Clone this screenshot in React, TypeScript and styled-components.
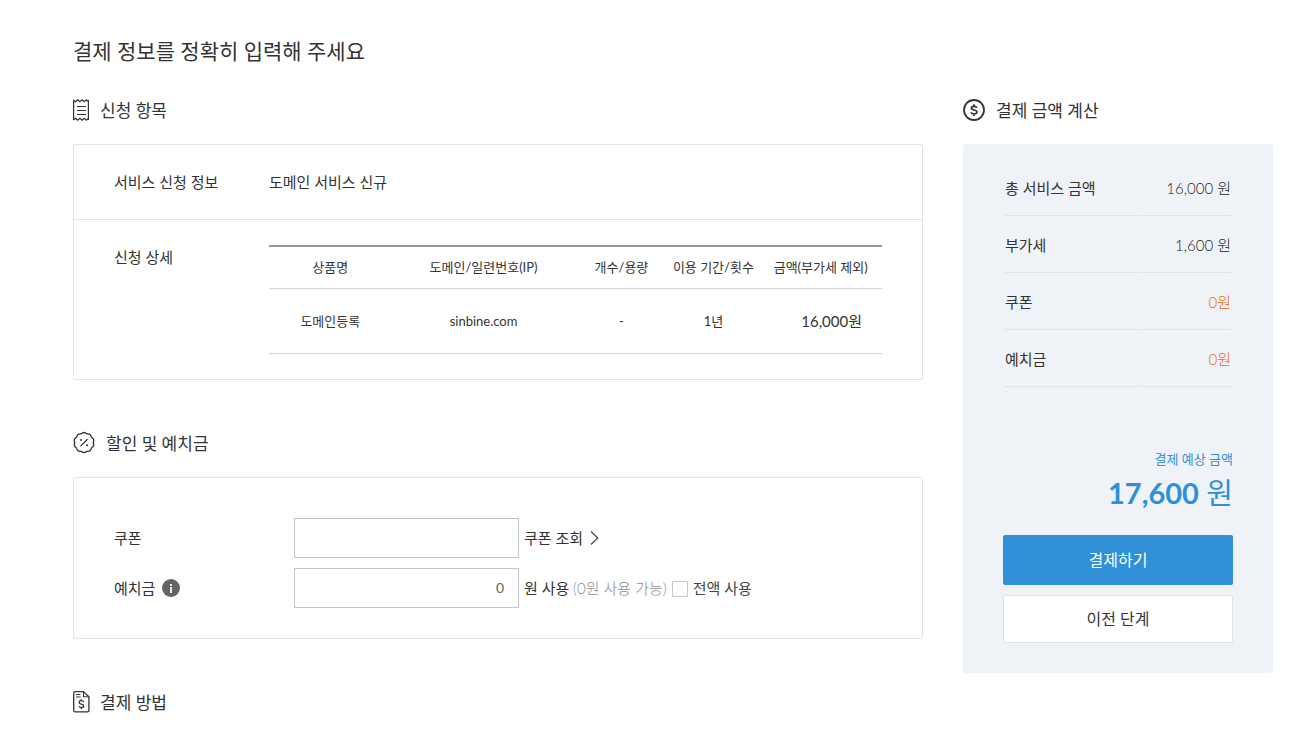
import React from 'react';
import styled, { createGlobalStyle } from 'styled-components';

const GlobalStyle = createGlobalStyle`
  *, *::before, *::after { box-sizing: border-box; }
  body {
    margin: 0;
    background: #fff;
    color: #333;
    font-family: Lato, 'Noto Sans CJK KR', sans-serif;
    font-size: 15px;
    line-height: 24px;
  }
  button, input { font: inherit; color: inherit; }
`;

const Page = styled.main`
  padding: 35px 34px 0 73px;
`;

const Title = styled.h1`
  margin: 0 0 31px;
  font-size: 21px;
  font-weight: 400;
  line-height: 32px;
`;

const Columns = styled.div`
  display: grid;
  grid-template-columns: minmax(0, 1fr) 310px;
  gap: 40px;
  align-items: start;
`;

const SectionHead = styled.h2<{ $gap: number }>`
  display: flex;
  align-items: flex-start;
  gap: ${(p) => p.$gap}px;
  margin: 0 0 20px;
  font-size: 17px;
  font-weight: 400;
  line-height: 26px;

  svg { flex: none; }
`;

const Panel = styled.div`
  margin-bottom: 51px;
  border: 1px solid #e4e4e4;
  border-radius: 2px;
`;

const InfoRow = styled.div`
  display: grid;
  grid-template-columns: 155px minmax(0, 1fr);
  padding: 25px 40px;

  & + & { border-top: 1px solid #e4e4e4; }
`;

const ItemTable = styled.table`
  width: 100%;
  table-layout: fixed;
  border-collapse: collapse;
  border-top: 2px solid #969696;
  font-size: 13px;
  text-align: center;
`;

const ItemHead = styled.th<{ $width: string }>`
  width: ${(p) => p.$width};
  height: 42px;
  padding: 0;
  border-bottom: 1px solid #d5d5d5;
  font-weight: 400;
  white-space: nowrap;
`;

const ItemCell = styled.td`
  height: 65px;
  padding: 0;
  border-bottom: 1px solid #d5d5d5;
`;

const PriceCell = styled(ItemCell)`
  padding-right: 20px;
  font-size: 15px;
  text-align: right;
`;

const Form = styled.form`
  display: grid;
  gap: 10px;
  padding: 40px 40px 30px;
`;

const FormRow = styled.div`
  display: grid;
  grid-template-columns: 180px minmax(0, 1fr);
  align-items: center;
`;

const FieldName = styled.div`
  display: flex;
  align-items: center;
  gap: 7px;
`;

const Controls = styled.div`
  display: flex;
  align-items: center;
  gap: 5px;
`;

const TextBox = styled.input`
  width: 225px;
  height: 40px;
  padding: 0 14px;
  border: 1px solid #c4c4c4;
  border-radius: 0;
  background: #fff;
  color: #666;
  font-size: 14px;
  text-align: right;
`;

const InfoButton = styled.button`
  display: flex;
  padding: 0;
  border: 0;
  background: none;
  cursor: pointer;
`;

const LookupLink = styled.a`
  display: flex;
  align-items: center;
  gap: 7px;
  color: #333;
  text-decoration: none;
`;

const Available = styled.span`
  color: #8c8c8c;
  font-weight: 300;
`;

const UseAll = styled.label`
  display: flex;
  align-items: center;
  gap: 5px;
  color: #444;
`;

const CheckBox = styled.input`
  appearance: none;
  width: 16px;
  height: 16px;
  margin: 2px 0 0;
  border: 1px solid #c4c4c4;
  border-radius: 1px;
  background: #fff;

  &:checked { background: #2f90d7; }
`;

const Summary = styled.div`
  padding: 15px 40px 30px;
  border-radius: 2px;
  background: #eff3f8;
`;

const SumTable = styled.table`
  width: 100%;
  border-collapse: separate;
  border-spacing: 2px;
`;

const SumName = styled.th`
  width: 133px;
  height: 55px;
  padding: 0;
  border-bottom: 1px solid #dfe3e8;
  font-weight: 400;
  text-align: left;
`;

const SumValue = styled.td<{ $accent?: boolean }>`
  padding: 0;
  border-bottom: 1px solid #dfe3e8;
  color: ${(p) => (p.$accent ? '#e8690f' : '#222')};
  font-weight: 300;
  text-align: right;
`;

const Total = styled.div`
  margin: 59px 0 19px;
  color: #2f90d7;
  text-align: right;
`;

const TotalLabel = styled.div`
  font-size: 13px;
  line-height: 22px;
`;

const TotalAmount = styled.div`
  font-size: 29px;
  line-height: 46px;

  strong { font-weight: 700; }
`;

const ActionButton = styled.button<{ $primary?: boolean }>`
  display: block;
  width: 100%;
  height: ${(p) => (p.$primary ? 50 : 48)}px;
  margin-top: 10px;
  padding: 0;
  border: ${(p) => (p.$primary ? '0' : '1px solid #e0e2e5')};
  border-radius: 2px;
  background: ${(p) => (p.$primary ? '#2f90d7' : '#fff')};
  color: ${(p) => (p.$primary ? '#fff' : '#333')};
  font-size: 16px;
  cursor: pointer;
`;

const ReceiptIcon = () => (
  <svg width="17" height="24" viewBox="1 0 17 24" fill="none" stroke="#333" aria-hidden="true">
    <path d="M1.600 2v20M16.400 2v20" strokeWidth="1.2" />
    <path d="M1.500 1.800l2 2 2.200-2 2.200 2 2.200-2 2.200 2 2.200-2 2 2M1.500 22.200l2-2 2.200 2 2.200-2 2.200 2 2.200-2 2.200 2 2-2" strokeWidth="1.2" />
    <path d="M5 8.500h9M5 12.500h9M5 16.500h9" strokeWidth="1.1" />
  </svg>
);

const CouponIcon = () => (
  <svg width="22" height="24" viewBox="0 0 22 24" fill="none" stroke="#333" strokeLinecap="round" strokeLinejoin="round" aria-hidden="true">
    <path d="M8.100 2.900Q11 .2 13.900 2.900Q17.800 2.400 18.400 6.200Q21.900 8 20.200 11.600Q21.900 15.200 18.400 17Q17.800 20.900 13.900 20.300Q11 23 8.100 20.300Q4.200 20.900 3.600 17Q.1 15.200 1.800 11.600Q.1 8 3.600 6.200Q4.200 2.400 8.100 2.900Z" strokeWidth="1.300" />
    <path d="M7.800 14.900l6.400-6.400" strokeWidth="1.200" />
    <circle cx="8" cy="9" r="1" fill="#333" stroke="none" />
    <circle cx="14" cy="14.200" r="1" fill="#333" stroke="none" />
  </svg>
);

const BillIcon = () => (
  <svg width="17" height="24" viewBox="0 0 17 24" fill="none" stroke="#333" strokeLinejoin="round" aria-hidden="true">
    <path d="M2.100 1.600h8.400l5.400 5.200v13.600q0 1.400-1.400 1.400H2.100Q.7 21.800.7 20.400V3q0-1.400 1.400-1.400Z" strokeWidth="1.300" />
    <path d="M10.500 1.600v5.200h5.400M3 4.500h4.500M3 7h4.500" strokeWidth="1.100" />
    <path d="M10.700 12q-.5-1.300-2.400-1.300-2.100 0-2.100 1.700 0 1.300 2.200 1.700 2.300.4 2.300 1.800 0 1.600-2.300 1.600-2 0-2.500-1.400M8.300 9.200v1.500M8.300 17.500v1.500" strokeWidth="1.300" />
  </svg>
);

const MoneyIcon = () => (
  <svg width="22" height="24" viewBox="0 0 22 24" fill="none" stroke="#333" aria-hidden="true">
    <circle cx="11" cy="12" r="10" strokeWidth="1.800" />
    <path d="M13.900 9.800q-.6-1.500-2.800-1.500-2.700 0-2.700 1.800 0 1.400 2.600 1.900 2.900.5 2.900 2.100 0 1.900-2.800 1.900-2.500 0-3-1.700M11 6.300v2M11 16v2" strokeWidth="1.700" />
  </svg>
);

const InfoIcon = () => (
  <svg width="18" height="18" viewBox="0 0 18 18" aria-hidden="true">
    <circle cx="9" cy="9" r="9" fill="#63646a" />
    <path d="M8 5h2v2H8zM8 8h2v6H8z" fill="#f4f0b8" />
  </svg>
);

const ChevronIcon = () => (
  <svg width="9" height="16" viewBox="0 0 9 16" fill="none" stroke="#444" strokeWidth="1.200" aria-hidden="true">
    <path d="M1 1.500l6.800 6.500L1 14.500" />
  </svg>
);

const itemColumns = [
  { name: '상품명', width: '20%' },
  { name: '도메인/일련번호(IP)', width: '30%' },
  { name: '개수/용량', width: '15%' },
  { name: '이용 기간/횟수', width: '15%' },
  { name: '금액(부가세 제외)', width: '20%' },
];

const amounts = [
  { name: '총 서비스 금액', value: '16,000 원' },
  { name: '부가세', value: '1,600 원' },
  { name: '쿠폰', value: '0원', accent: true },
  { name: '예치금', value: '0원', accent: true },
];

export default function App() {
  return (
    <>
      <GlobalStyle />
      <Page>
        <Title>결제 정보를 정확히 입력해 주세요</Title>
        <Columns>
          <div>
            <section>
              <SectionHead $gap={10}><ReceiptIcon />신청 항목</SectionHead>
              <Panel>
                <InfoRow>
                  <div>서비스 신청 정보</div>
                  <div>도메인 서비스 신규</div>
                </InfoRow>
                <InfoRow>
                  <div>신청 상세</div>
                  <ItemTable>
                    <thead>
                      <tr>
                        {itemColumns.map((c) => (
                          <ItemHead key={c.name} $width={c.width} scope="col">{c.name}</ItemHead>
                        ))}
                      </tr>
                    </thead>
                    <tbody>
                      <tr>
                        <ItemCell>도메인등록</ItemCell>
                        <ItemCell>sinbine.com</ItemCell>
                        <ItemCell>-</ItemCell>
                        <ItemCell>1년</ItemCell>
                        <PriceCell>16,000원</PriceCell>
                      </tr>
                    </tbody>
                  </ItemTable>
                </InfoRow>
              </Panel>
            </section>
            <section>
              <SectionHead $gap={11}><CouponIcon />할인 및 예치금</SectionHead>
              <Panel>
                <Form onSubmit={(e) => e.preventDefault()}>
                  <FormRow>
                    <FieldName><label htmlFor="coupon">쿠폰</label></FieldName>
                    <Controls>
                      <TextBox id="coupon" type="text" />
                      <LookupLink href="#coupons">쿠폰 조회<ChevronIcon /></LookupLink>
                    </Controls>
                  </FormRow>
                  <FormRow>
                    <FieldName>
                      <label htmlFor="deposit">예치금</label>
                      <InfoButton type="button" aria-label="예치금 안내"><InfoIcon /></InfoButton>
                    </FieldName>
                    <Controls>
                      <TextBox id="deposit" type="text" defaultValue="0" />
                      <span>원 사용 <Available>(0원 사용 가능)</Available></span>
                      <UseAll><CheckBox type="checkbox" />전액 사용</UseAll>
                    </Controls>
                  </FormRow>
                </Form>
              </Panel>
            </section>
            <section>
              <SectionHead $gap={10}><BillIcon />결제 방법</SectionHead>
            </section>
          </div>
          <aside>
            <SectionHead $gap={11}><MoneyIcon />결제 금액 계산</SectionHead>
            <Summary>
              <SumTable>
                <tbody>
                  {amounts.map((a) => (
                    <tr key={a.name}>
                      <SumName scope="row">{a.name}</SumName>
                      <SumValue $accent={a.accent}>{a.value}</SumValue>
                    </tr>
                  ))}
                </tbody>
              </SumTable>
              <Total>
                <TotalLabel>결제 예상 금액</TotalLabel>
                <TotalAmount><strong>17,600</strong> 원</TotalAmount>
              </Total>
              <ActionButton type="button" $primary>결제하기</ActionButton>
              <ActionButton type="button">이전 단계</ActionButton>
            </Summary>
          </aside>
        </Columns>
      </Page>
    </>
  );
}
